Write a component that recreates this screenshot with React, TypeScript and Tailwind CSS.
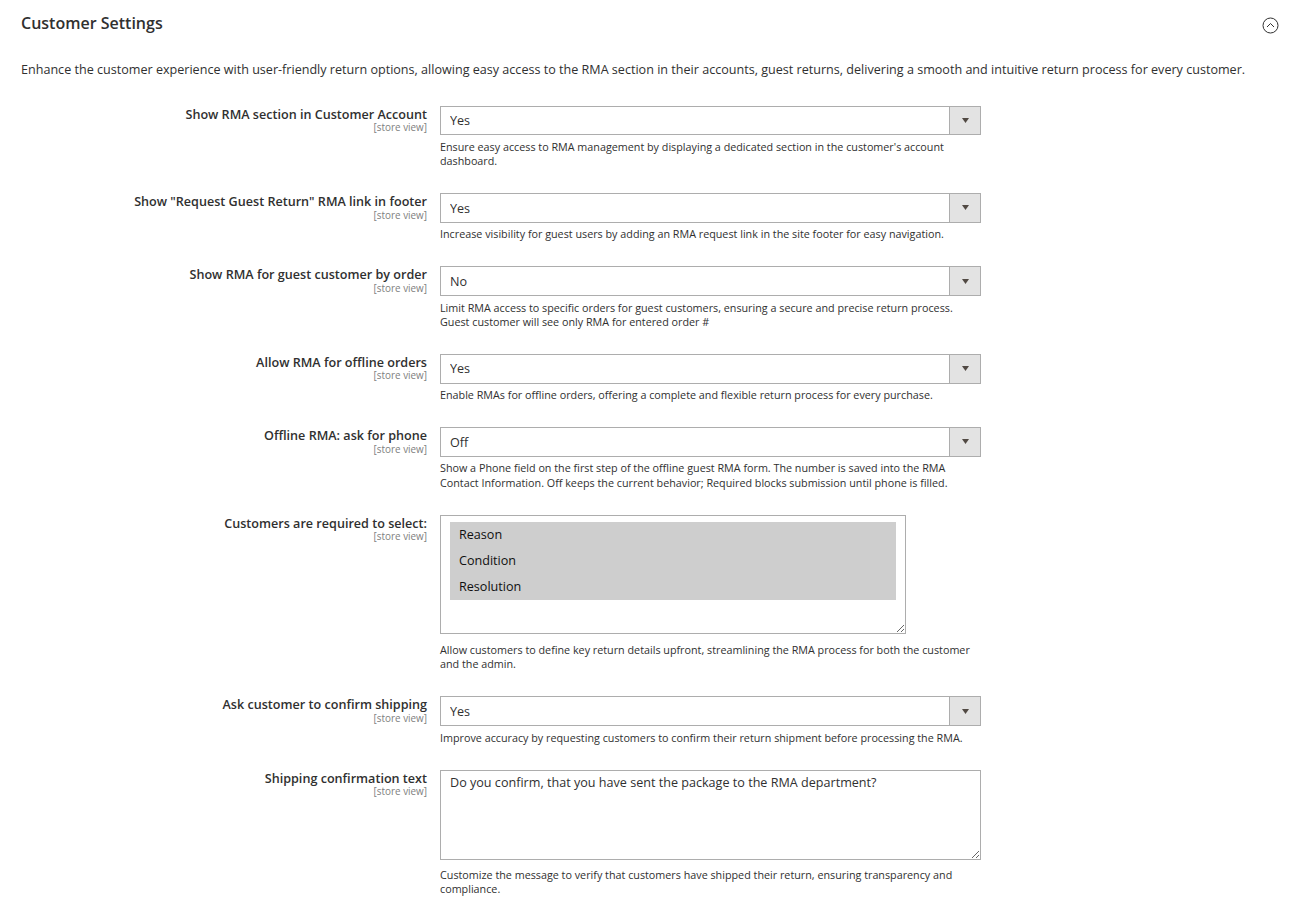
import React from "react";

function Label({ text }: { text: string }) {
  return (
    <div className="w-[427px] shrink-0 text-right">
      <div className="text-[12.6px] leading-[17px] font-semibold text-[#303030]">{text}</div>
      <div className="text-[9.9px] leading-[11px] text-[#808080] -mt-[0.5px]">[store view]</div>
    </div>
  );
}

function Comment({ lines, className }: { lines: string[]; className: string }) {
  return (
    <div className={`${className} text-[10.78px] leading-[14.4px] text-[#303030] whitespace-nowrap`}>
      {lines.map((l) => (
        <div key={l}>{l}</div>
      ))}
    </div>
  );
}

function SelectRow({ label, value, lines }: { label: string; value: string; lines: string[] }) {
  return (
    <div className="flex gap-[13px] pb-[24.6px]">
      <Label text={label} />
      <div className="w-[541px]">
        <div className="relative h-[29.6px]">
          <select
            defaultValue={value}
            className="appearance-none block w-full h-full border border-[#adadad] bg-white rounded-none pl-[9px] pt-[2px] text-[12.6px] text-[#303030] outline-none"
          >
            <option>{value}</option>
          </select>
          <div className="absolute right-0 top-0 bottom-0 w-[32px] bg-[#e3e3e3] border border-[#adadad] flex items-center justify-center">
            <svg width="7" height="5" viewBox="0 0 7 5">
              <path d="M0 0h7L3.5 5z" fill="#514943" />
            </svg>
          </div>
        </div>
        <Comment lines={lines} className="mt-[4.6px]" />
      </div>
    </div>
  );
}

export default function App() {
  return (
    <div className="w-[1300px] h-[913px] overflow-hidden bg-white font-['Open_Sans',sans-serif] text-[#303030]">
      <div className="flex items-center justify-between pl-[21px] pr-[21px] pt-[12px]">
        <h2 className="text-[16px] leading-[22px] font-semibold text-[#303030]">Customer Settings</h2>
        <svg width="17" height="17" viewBox="0 0 17 17" fill="none" stroke="#303030" className="mt-[4px]">
          <circle cx="8.5" cy="8.5" r="7.5" strokeWidth="1" />
          <path d="M5 10l3.5-3.5L12 10" strokeWidth="1" />
        </svg>
      </div>
      <p className="pl-[21px] mt-[27px] text-[12.58px] leading-[18px] text-[#303030] whitespace-nowrap">
        Enhance the customer experience with user-friendly return options, allowing easy access to the RMA section in their accounts, guest returns, delivering a smooth and intuitive return process for every customer.
      </p>
      <div className="mt-[26.6px]">
        <SelectRow
          label="Show RMA section in Customer Account"
          value="Yes"
          lines={["Ensure easy access to RMA management by displaying a dedicated section in the customer's account", "dashboard."]}
        />
        <SelectRow
          label={'Show "Request Guest Return" RMA link in footer'}
          value="Yes"
          lines={["Increase visibility for guest users by adding an RMA request link in the site footer for easy navigation."]}
        />
        <SelectRow
          label="Show RMA for guest customer by order"
          value="No"
          lines={["Limit RMA access to specific orders for guest customers, ensuring a secure and precise return process.", "Guest customer will see only RMA for entered order #"]}
        />
        <SelectRow
          label="Allow RMA for offline orders"
          value="Yes"
          lines={["Enable RMAs for offline orders, offering a complete and flexible return process for every purchase."]}
        />
        <SelectRow
          label="Offline RMA: ask for phone"
          value="Off"
          lines={["Show a Phone field on the first step of the offline guest RMA form. The number is saved into the RMA", "Contact Information. Off keeps the current behavior; Required blocks submission until phone is filled."]}
        />
        <div className="flex gap-[13px] pb-[24.8px]">
          <Label text="Customers are required to select:" />
          <div className="w-[541px]">
            <select
              multiple
              defaultValue={["Reason", "Condition", "Resolution"]}
              className="block w-[466px] h-[119px] border border-[#adadad] bg-white rounded-none pt-[6px] px-[9px] text-[12.6px] text-[#303030] outline-none resize overflow-hidden"
            >
              <option className="h-[26px] leading-[18px] px-[9px] pt-0 pb-[1px] flex items-center">Reason</option>
              <option className="h-[26px] leading-[18px] px-[9px] pt-0 pb-[1px] flex items-center">Condition</option>
              <option className="h-[26px] leading-[18px] px-[9px] pt-0 pb-[1px] flex items-center">Resolution</option>
            </select>
            <Comment
              className="mt-[9px]"
              lines={["Allow customers to define key return details upfront, streamlining the RMA process for both the customer", "and the admin."]}
            />
          </div>
        </div>
        <SelectRow
          label="Ask customer to confirm shipping"
          value="Yes"
          lines={["Improve accuracy by requesting customers to confirm their return shipment before processing the RMA."]}
        />
        <div className="flex gap-[13px]">
          <Label text="Shipping confirmation text" />
          <div className="w-[541px]">
            <textarea
              defaultValue="Do you confirm, that you have sent the package to the RMA department?"
              className="block w-[541px] h-[90px] border border-[#adadad] bg-white rounded-none px-[9px] py-[3px] text-[12.6px] leading-[18px] text-[#303030] outline-none"
            />
            <Comment
              className="mt-[8.5px]"
              lines={["Customize the message to verify that customers have shipped their return, ensuring transparency and", "compliance."]}
            />
          </div>
        </div>
      </div>
    </div>
  );
}
